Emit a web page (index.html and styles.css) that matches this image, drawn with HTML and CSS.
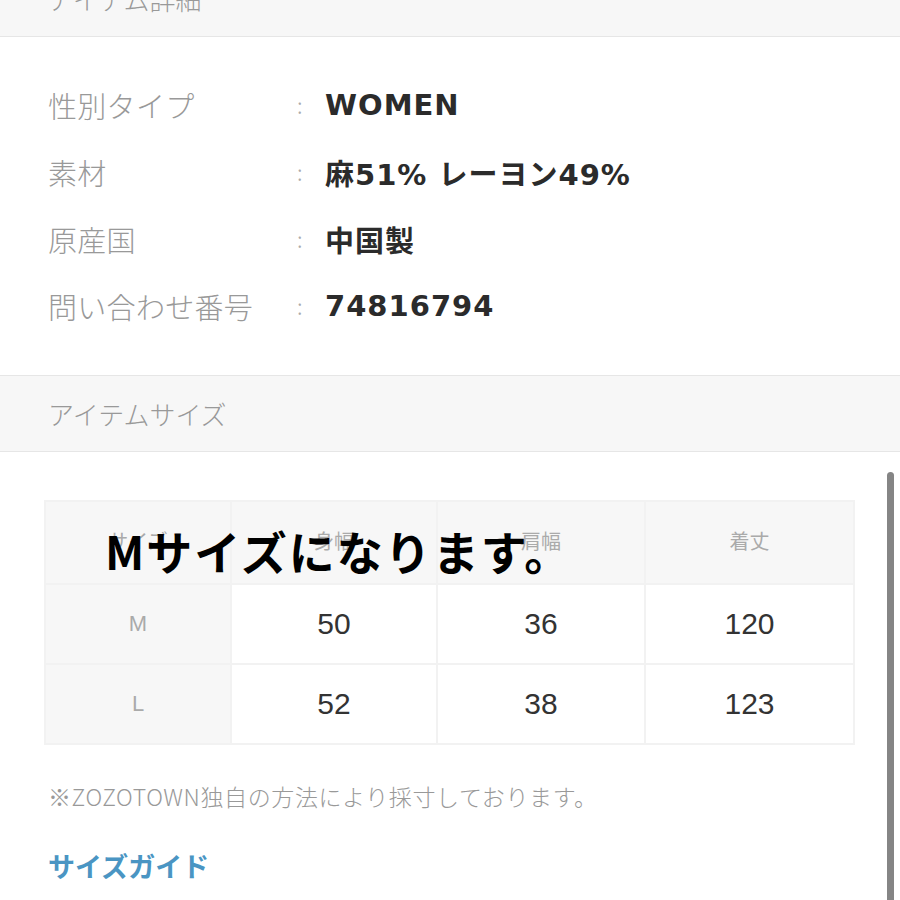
FILE: index.html
```html
<!DOCTYPE html>
<html lang="ja">
<head>
  <meta charset="UTF-8">
  <title>アイテム詳細</title>
  <link rel="stylesheet" href="styles.css">
</head>
<body>
  <div class="page">
    <div class="sechead sechead-top">アイテム詳細</div>
    <dl class="spec">
      <div class="spec-row"><dt>性別タイプ</dt><dd>WOMEN</dd></div>
      <div class="spec-row"><dt>素材</dt><dd>麻51% レーヨン49%</dd></div>
      <div class="spec-row"><dt>原産国</dt><dd>中国製</dd></div>
      <div class="spec-row"><dt>問い合わせ番号</dt><dd>74816794</dd></div>
    </dl>
    <div class="sechead">アイテムサイズ</div>
    <div class="sizebox">
      <table class="sizetable">
        <colgroup>
          <col class="c1"><col class="c2"><col class="c3"><col class="c4">
        </colgroup>
        <tr><th>サイズ</th><th>身幅</th><th>肩幅</th><th>着丈</th></tr>
        <tr><th class="rowname">M</th><td>50</td><td>36</td><td>120</td></tr>
        <tr><th class="rowname">L</th><td>52</td><td>38</td><td>123</td></tr>
      </table>
      <div class="caption">Mサイズになります。</div>
    </div>
    <p class="note">※ZOZOTOWN独自の方法により採寸しております。</p>
    <a class="guide" href="#">サイズガイド</a>
  </div>
  <div class="scrollbar"></div>
</body>
</html>
```

FILE: styles.css
```css
html,body{margin:0; padding:0; background:#fff; overflow:hidden;}
body{font-family:"Liberation Sans", "Noto Sans CJK JP", sans-serif; color:#333; width:900px; height:900px; position:relative;}
.page{margin-top:-39px;}

.sechead{height:75px; line-height:75px; padding-left:48px; background:#f7f7f7; border-top:1px solid #e6e6e6; border-bottom:1px solid #e6e6e6; color:#999; font-size:26px; font-family:"Noto Sans CJK JP", sans-serif; font-weight:300;}
.sechead-top{border-top:none;}

.spec{margin:0; padding:34px 0 36px 48px;}
.spec-row{display:flex; height:67px; align-items:center;}
.spec dt{width:249px; color:#999; font-size:29px; letter-spacing:0.3px; font-family:"Noto Sans CJK JP", sans-serif; font-weight:300; position:relative;}
.spec dt::after{content:":"; position:absolute; left:249px; top:0; color:#aaa; font-size:22px; line-height:40px;}
.spec dd{margin:0 0 0 28px; font-family:"DejaVu Sans", "Noto Sans CJK JP", sans-serif; font-weight:bold; font-size:29px; letter-spacing:1px; color:#2b2b2b;}

.sizebox{position:relative; margin:50px 0 0 46px; width:809px;}
.sizetable{width:809px; table-layout:fixed; border-collapse:separate; border-spacing:2px; background:#f2f2f2; margin:-2px;}
.c1{width:184px;} .c2{width:204px;} .c3{width:206px;} .c4{width:207px;}
.sizetable th, .sizetable td{text-align:center; padding:0;}
.sizetable tr:first-child th{height:77px; background:#f7f7f7; color:#aaa; font-weight:normal; font-size:20px; font-family:"Noto Sans CJK JP", sans-serif; vertical-align:middle; padding-bottom:4px;}
.sizetable .rowname{height:78px; background:#f7f7f7; color:#aaa; font-weight:normal; font-size:22px;}
.sizetable td{background:#fff; font-size:30px; color:#333;}

.caption{position:absolute; left:59px; top:20px; font-family:"Noto Sans CJK JP", sans-serif; font-weight:bold; font-size:46px; letter-spacing:2px; color:#000; line-height:60px;}

.note{margin:36px 0 0 48px; font-size:23px; letter-spacing:0.6px; color:#999; font-family:"Noto Sans CJK JP", sans-serif; font-weight:300;}
.guide{display:block; margin:33px 0 0 48px; font-size:27px; font-weight:bold; color:#4a95c3; text-decoration:none; font-family:"Noto Sans CJK JP", sans-serif;}

.scrollbar{position:absolute; left:887px; top:472px; width:7px; height:440px; border-radius:4px; background:#858585;}
```
